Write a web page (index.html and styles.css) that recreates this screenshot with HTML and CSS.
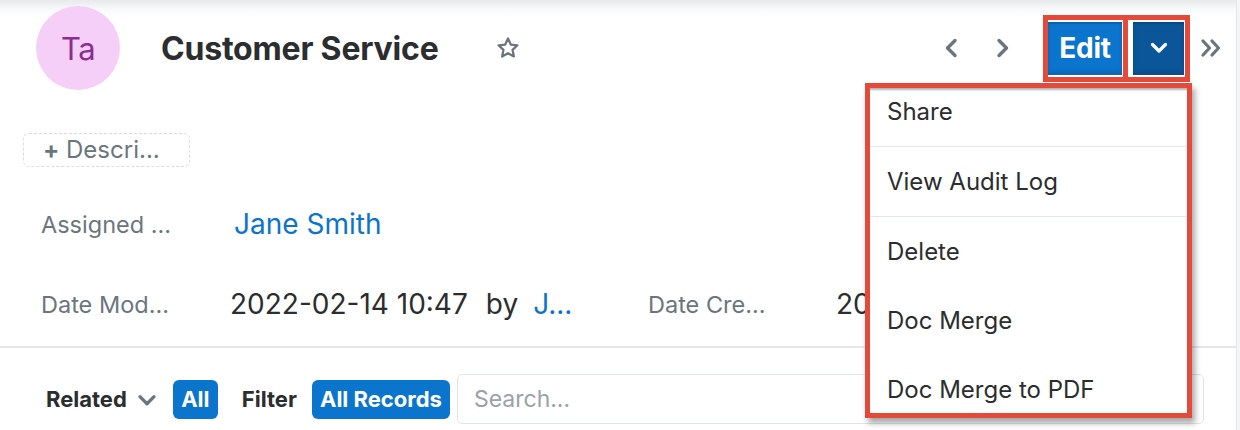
FILE: index.html
```html
<!DOCTYPE html>
<html>
<head>
<meta charset="utf-8">
<link rel="stylesheet" href="styles.css">
</head>
<body>
<div class="page">
  <div class="main">
    <header class="header">
      <div class="avatar">Ta</div>
      <h1 class="title">Customer Service</h1>
      <svg class="star" viewBox="0 0 24 24" width="26" height="26"><path d="M12 3.2l2.6 5.6 6.1.7-4.5 4.2 1.2 6.1L12 16.8l-5.4 3 1.2-6.1-4.5-4.2 6.1-.7z" fill="none" stroke="#6b757d" stroke-width="2.1" stroke-linejoin="round"/></svg>
      <div class="spacer"></div>
      <svg class="nav nav-prev" viewBox="0 0 14 20" width="14" height="20"><path d="M11 2.5 3.5 10l7.5 7.5" fill="none" stroke="#6b757d" stroke-width="3.4" stroke-linecap="round" stroke-linejoin="round"/></svg>
      <svg class="nav nav-next" viewBox="0 0 14 20" width="14" height="20"><path d="M3 2.5 10.5 10 3 17.5" fill="none" stroke="#6b757d" stroke-width="3.4" stroke-linecap="round" stroke-linejoin="round"/></svg>
      <div class="btn-group">
        <div class="mark mark-edit"><button class="btn btn-edit">Edit</button></div>
        <div class="mark mark-caret"><button class="btn btn-caret"><svg viewBox="0 0 18 12" width="18" height="12"><path d="M2.5 2.5 9 9l6.5-6.5" fill="none" stroke="#fff" stroke-width="3.2" stroke-linecap="round" stroke-linejoin="round"/></svg></button></div>
      </div>
      <svg class="more" viewBox="0 0 22 20" width="22" height="20"><path d="M3 3l6.5 7L3 17M12 3l6.5 7L12 17" fill="none" stroke="#6b757d" stroke-width="3.2" stroke-linecap="round" stroke-linejoin="round"/></svg>
    </header>

    <div class="desc"><span class="plus">+</span> Descri...</div>

    <div class="fields">
      <div class="label">Assigned ...</div>
      <div class="value link big">Jane Smith</div>
      <div></div><div></div>
      <div class="label">Date Mod...</div>
      <div class="value"><span class="date">2022-02-14 10:47</span><span class="by">by</span><span class="link">J...</span></div>
      <div class="label">Date Cre...</div>
      <div class="value">20</div>
    </div>

    <div class="divider"></div>

    <div class="toolbar">
      <span class="tb-label">Related</span>
      <svg class="tb-caret" viewBox="0 0 18 12" width="20" height="13"><path d="M2.5 2.5 9 9l6.5-6.5" fill="none" stroke="#6b757d" stroke-width="3" stroke-linecap="round" stroke-linejoin="round"/></svg>
      <span class="pill pill-all">All</span>
      <span class="tb-label filter">Filter</span>
      <span class="pill pill-records">All Records</span>
      <div class="search">
        <span class="placeholder">Search...</span>
      </div>
    </div>
  </div>

  <div class="menu">
    <ul class="menu-list">
      <li class="sep">Share</li>
      <li class="sep">View Audit Log</li>
      <li>Delete</li>
      <li>Doc Merge</li>
      <li>Doc Merge to PDF</li>
    </ul>
  </div>
</div>
</body>
</html>
```
FILE: styles.css
```css
* { box-sizing: border-box; }
html, body { margin: 0; padding: 0; }
body {
  font-family: Inter, "Noto Sans", "Liberation Sans", sans-serif;
  color: #2b2d2f;
  background: #fff;
}
.page {
  position: relative;
  width: 1240px;
  height: 430px;
  overflow: hidden;
  background: #f4f5f6;
}
.main {
  width: 1237px;
  height: 430px;
  border-right: 1px solid #e4e7ea;
  background: linear-gradient(to bottom, #e7e9eb 0, #f8f9fa 9px, #fff 18px);
}
.header {
  display: flex;
  align-items: center;
  height: 96px;
  padding: 0 14px 0 36px;
}
.avatar {
  width: 84px;
  height: 84px;
  border-radius: 50%;
  background: #f6cff8;
  color: #8d2d8e;
  font-size: 31px;
  display: flex;
  align-items: center;
  justify-content: center;
  letter-spacing: -0.5px;
}
.title {
  margin: 0 0 0 41px;
  font-size: 32px;
  font-weight: 700;
  color: #2b2d2f;
  letter-spacing: -0.2px;
}
.star { margin-left: 56px; }
.spacer { flex: 1; }
.nav-prev { margin-right: 38px; }
.nav-next { margin-right: 33px; }
.btn-group { display: flex; }
.mark {
  border: 5px solid #e4493a;
  padding: 2px 1px 2px 0;
}
.mark-caret { border-left-width: 0; padding: 2px 1px 2px 5px; }
.btn {
  border: 0;
  margin: 0;
  height: 53px;
  font-family: inherit;
  color: #fff;
  display: flex;
  align-items: center;
  justify-content: center;
  box-shadow: inset 0 -3px 4px rgba(0,0,0,0.12), inset 0 2px 1px rgba(0,0,0,0.15);
}
.btn-edit {
  width: 74px;
  background: #0b74cc;
  font-size: 28px;
  font-weight: 700;
  letter-spacing: -0.3px;
}
.btn-caret {
  width: 51px;
  background: #0a5699;
}
.more { margin-left: 10px; }

.desc {
  margin: 37px 0 0 23px;
  width: 167px;
  height: 34px;
  border: 1.5px dashed #d9dde0;
  border-radius: 6px;
  color: #6b757d;
  font-size: 24px;
  padding-left: 19px;
  line-height: 31px;
  white-space: nowrap;
}
.plus { font-weight: 700; }

.fields {
  display: grid;
  grid-template-columns: 189px 418px 188px 40px;
  grid-auto-rows: 80px;
  margin: 17px 0 0 41px;
  align-items: center;
}
.label {
  color: #6b757d;
  font-size: 23.5px;
  white-space: nowrap;
}
.value { font-size: 28px; color: #2b2d2f; white-space: nowrap; }
.value.big { padding-left: 4px; }
.link { color: #0b74cc; }
.by { margin: 0 15px 0 18px; }

.divider {
  height: 2px;
  background: #e5e8eb;
  margin-top: 2px;
}

.toolbar {
  display: flex;
  align-items: center;
  padding: 26px 32px 0 46px;
}
.tb-label {
  font-weight: 700;
  font-size: 22px;
  color: #2b2d2f;
}
.tb-caret { margin-left: 10px; margin-top: 2px; }
.pill {
  background: #0b74cc;
  color: #fff;
  font-weight: 700;
  font-size: 22px;
  height: 39px;
  line-height: 39px;
  padding: 0 8px;
  border-radius: 6px;
  text-align: center;
}
.pill-all { margin-left: 16px; width: 45px; padding: 0; }
.filter { margin-left: 24px; }
.pill-records { margin-left: 15px; width: 138px; padding: 0; }
.search {
  flex: 1;
  margin-left: 7px;
  height: 50px;
  border: 1.5px solid #e1e4e7;
  border-radius: 5px;
  display: flex;
  align-items: center;
  padding-left: 16px;
}
.placeholder { color: #9aa1a7; font-size: 23px; }

.menu {
  position: absolute;
  left: 865px;
  top: 83px;
  width: 327px;
  height: 335px;
  border: 5px solid #e4493a;
  background: #fff;
  overflow: hidden;
  box-shadow: 3px 5px 6px rgba(0,0,0,0.35), inset 0 3px 2px -1px rgba(0,0,0,0.3);
}
.menu-list {
  list-style: none;
  margin: -11px 0 0 0;
  padding: 0;
}
.menu-list li {
  height: 69px;
  display: flex;
  align-items: center;
  padding-left: 17px;
  font-size: 24px;
  color: #2b2d2f;
}
.menu-list li.sep { border-bottom: 1.5px solid #e5e8eb; height: 70px; }
```
